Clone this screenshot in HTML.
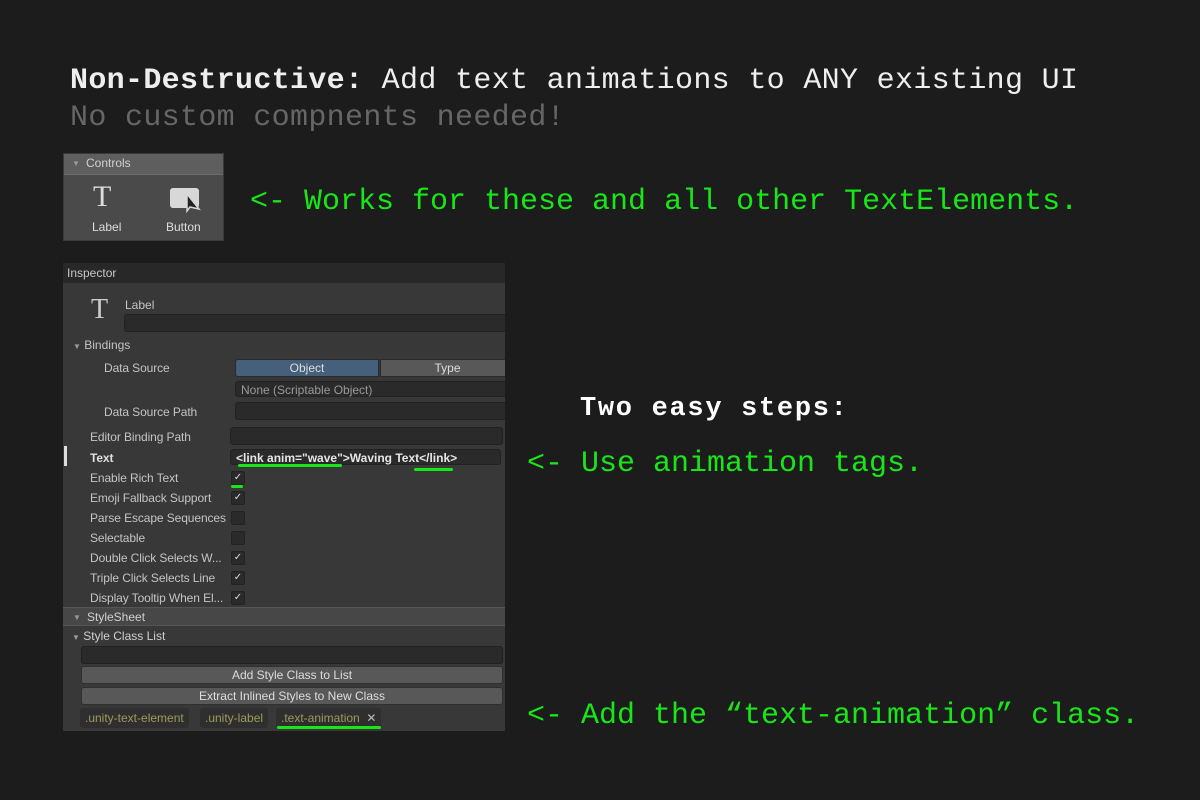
<!DOCTYPE html><html><head><style>
body{margin:0;width:1200px;height:800px;background:#1c1c1c;position:relative;overflow:hidden;font-family:"Liberation Sans",sans-serif}
.m{position:absolute;font-family:"Liberation Mono",monospace;white-space:pre;line-height:1}
.g{color:#19e619}
.a{position:absolute}
.lbl{position:absolute;left:90px;font-size:12px;color:#c4c4c4;white-space:nowrap;letter-spacing:-0.1px}
.fld{position:absolute;background:#2a2a2a;border:1px solid #212121;border-radius:3px}
.cb{position:absolute;left:231px;width:12px;height:12px;background:#2a2a2a;border:1px solid #222;border-radius:2px;color:#ddd;font-size:10px;line-height:12px;text-align:center}
.btn{position:absolute;left:81px;width:420px;height:16px;background:#585858;border:1px solid #303030;border-radius:3px;color:#ddd;font-size:12px;text-align:center;line-height:16px}
.tag{position:absolute;top:708px;height:20px;background:#2f2f2f;border-radius:3px;color:#a09a5a;font-size:12px;line-height:20px;padding:0 5px}
.ul{position:absolute;height:3px;background:#19e619;border-radius:2px}
#insp{position:absolute;left:63px;top:263px;width:442px;height:468px;background:#383838;overflow:hidden}
</style></head><body>
<div class="m" style="left:70px;top:66px;font-size:30px;color:#eee;letter-spacing:0.33px"><b>Non-Destructive:</b> Add text animations to ANY existing UI</div>
<div class="m" style="left:70px;top:103px;font-size:30px;color:#666;letter-spacing:0.33px">No custom compnents needed!</div>
<div class="m g" style="left:250px;top:187px;font-size:30px">&lt;- Works for these and all other TextElements.</div>
<div class="m" style="left:580px;top:396px;font-size:27px;color:#fff;font-weight:bold;letter-spacing:1.7px">Two easy steps:</div>
<div class="m g" style="left:527px;top:449px;font-size:30px">&lt;- Use animation tags.</div>
<div class="m g" style="left:527px;top:701px;font-size:30px">&lt;- Add the “text-animation” class.</div>

<div class="a" style="left:63px;top:153px;width:161px;height:88px;background:#4a4a4a;border:1px solid #3a3a3a;box-sizing:border-box">
<div style="height:20px;background:#5e5e5e;border-bottom:1px solid #6e6e6e;color:#d0d0d0;font-size:12px;line-height:19px;padding-left:22px;position:relative"><span style="position:absolute;left:8px;font-size:8px;color:#999">▼</span>Controls</div>
<div class="a" style="left:29px;top:28px;font-family:'Liberation Serif',serif;font-size:30px;color:#ddd;line-height:1">T</div>
<svg class="a" style="left:105px;top:33px" width="32" height="26"><rect x="1" y="1" width="29" height="20" rx="3" fill="#d8d8d8"/><path d="M18 7 L18 24 L21 20 L30 22 Z" fill="#222" stroke="#d8d8d8" stroke-width="1.5"/></svg>
<div class="a" style="left:28px;top:66px;color:#ddd;font-size:12px">Label</div>
<div class="a" style="left:102px;top:66px;color:#ddd;font-size:12px">Button</div>
</div>

<div id="insp">
<div class="a" style="left:0;top:0;width:442px;height:20px;background:#282828;color:#c8c8c8;font-size:12px;line-height:21px;padding-left:4px;box-sizing:border-box">Inspector</div>
<div class="a" style="left:28px;top:33px;font-family:'Liberation Serif',serif;font-size:28px;color:#ccc;line-height:1">T</div>
<div class="a" style="left:62px;top:35px;font-size:12px;color:#c4c4c4">Label</div>
<div class="fld" style="left:61px;top:51px;width:400px;height:16px"></div>
<div class="a" style="left:10px;top:75px;font-size:12px;color:#c4c4c4"><span style="font-size:8px;color:#999">▼</span> Bindings</div>
<div class="lbl" style="left:41px;top:98px">Data Source</div>
<div class="a" style="left:172px;top:96px;width:144px;height:18px;background:#46607c;border:1px solid #2a2a2a;border-radius:3px 0 0 3px;color:#ddd;font-size:12px;text-align:center;line-height:16px;box-sizing:border-box">Object</div>
<div class="a" style="left:317px;top:96px;width:135px;height:18px;background:#585858;border:1px solid #2a2a2a;color:#ddd;font-size:12px;text-align:center;line-height:16px;box-sizing:border-box">Type</div>
<div class="fld" style="left:172px;top:118px;width:300px;height:16px;color:#999;font-size:12px;line-height:16px;padding-left:5px;box-sizing:border-box">None (Scriptable Object)</div>
<div class="lbl" style="left:41px;top:142px">Data Source Path</div>
<div class="fld" style="left:172px;top:139px;width:300px;height:16px"></div>
<div class="lbl" style="left:27px;top:167px">Editor Binding Path</div>
<div class="fld" style="left:167px;top:164px;width:271px;height:16px"></div>
<div class="a" style="left:1px;top:183px;width:3px;height:20px;background:#ddd"></div>
<div class="lbl" style="left:27px;top:188px;color:#e0e0e0;font-weight:bold">Text</div>
<div class="fld" style="left:167px;top:186px;width:271px;height:16px;color:#e6e6e6;font-size:12px;line-height:16px;padding-left:5px;box-sizing:border-box;font-weight:bold">&lt;link anim="wave"&gt;Waving Text&lt;/link&gt;</div>
<div class="ul" style="left:175px;top:201px;width:104px"></div>
<div class="ul" style="left:351px;top:205px;width:39px"></div>
<div class="lbl" style="left:27px;top:208px">Enable Rich Text</div><div class="cb" style="left:168px;top:208px">✓</div>
<div class="ul" style="left:168px;top:222px;width:12px"></div>
<div class="lbl" style="left:27px;top:228px">Emoji Fallback Support</div><div class="cb" style="left:168px;top:228px">✓</div>
<div class="lbl" style="left:27px;top:248px">Parse Escape Sequences</div><div class="cb" style="left:168px;top:248px"></div>
<div class="lbl" style="left:27px;top:268px">Selectable</div><div class="cb" style="left:168px;top:268px"></div>
<div class="lbl" style="left:27px;top:288px">Double Click Selects W...</div><div class="cb" style="left:168px;top:288px">✓</div>
<div class="lbl" style="left:27px;top:308px">Triple Click Selects Line</div><div class="cb" style="left:168px;top:308px">✓</div>
<div class="lbl" style="left:27px;top:328px">Display Tooltip When El...</div><div class="cb" style="left:168px;top:328px">✓</div>
<div class="a" style="left:0;top:344px;width:442px;height:19px;background:#474747;border-top:1px solid #555;border-bottom:1px solid #555;color:#d0d0d0;font-size:12px;line-height:19px;padding-left:24px;box-sizing:border-box"><span style="position:absolute;left:10px;font-size:8px;color:#999">▼</span>StyleSheet</div>
<div class="a" style="left:9px;top:366px;font-size:12px;color:#d0d0d0"><span style="font-size:8px;color:#999">▼</span> Style Class List</div>
<div class="fld" style="left:18px;top:383px;width:420px;height:16px"></div>
<div class="btn" style="left:18px;top:403px">Add Style Class to List</div>
<div class="btn" style="left:18px;top:424px">Extract Inlined Styles to New Class</div>
<div class="tag" style="left:17px;top:445px">.unity-text-element</div>
<div class="tag" style="left:137px;top:445px">.unity-label</div>
<div class="tag" style="left:213px;top:445px">.text-animation &nbsp;<span style="color:#bbb">✕</span></div>
<div class="ul" style="left:214px;top:463px;width:104px"></div>
</div>
</body></html>
